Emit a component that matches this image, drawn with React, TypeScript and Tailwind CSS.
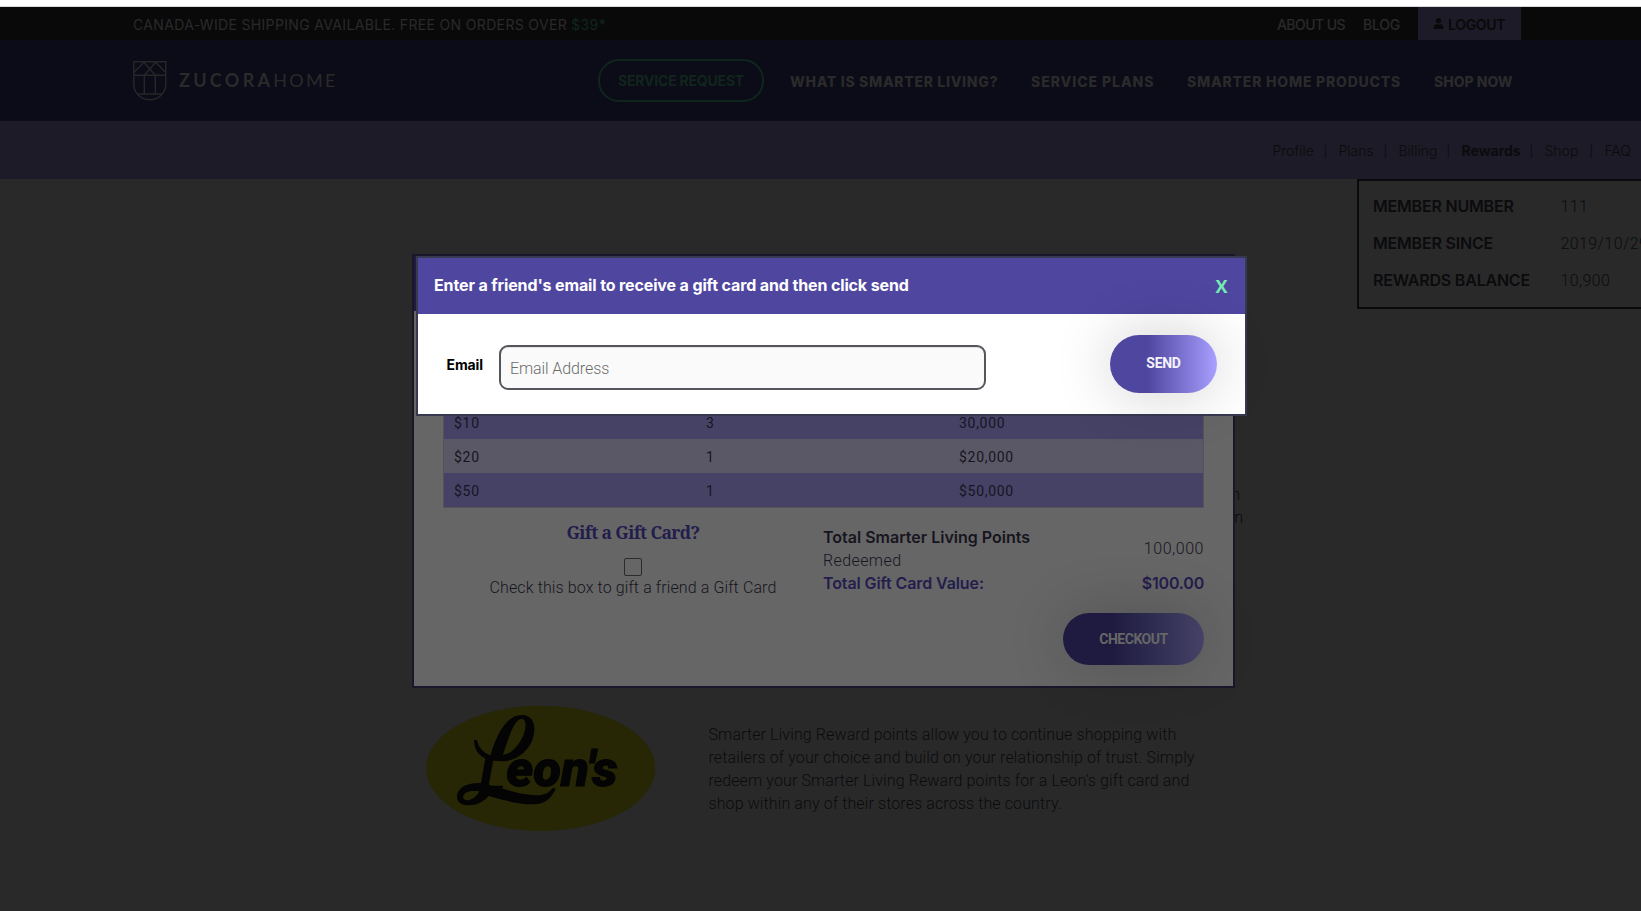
import { FaUser } from "react-icons/fa";

const light = "font-['Roboto',sans-serif] font-light";

function ShieldMark() {
  return (
    <svg width="34" height="40" viewBox="0 0 34 40" fill="none" stroke="#272728" strokeWidth="1.4">
      <path d="M.8.8h32v22.400a16 15.600 0 0 1-32 0z" />
      <path d="M.8 14.200h32M11.300 14.200v18.600M22.300 14.200v18.600M5 33h23.600" />
      <path d="M.8 11.500 11 1.200l11.300 13M32.800 11.500 22.600 1.200l-11.300 13" />
    </svg>
  );
}

function LeonsLogo() {
  return (
    <svg width="230" height="126" viewBox="78 45 690 378" fill="#040404">
      <ellipse cx="422" cy="235" rx="344" ry="188" fill="#272706" />
      <path
        fillRule="evenodd"
        d="M272 195C290 130 322 75 365 75C396 75 405 100 403 122C400 175 352 215 303 214L266 211C240 200 222 182 222 150L231 150C236 175 255 192 272 195ZM309 194C324 150 342 85 366 86C385 90 376 132 360 155C345 178 325 195 309 194Z"
      />
      <path
        fillRule="evenodd"
        d="M248 280C210 275 171 290 171 320C171 340 190 346 208 346C235 346 255 330 266 318C310 330 350 343 400 343C440 343 455 320 468 296L458 294C445 312 425 318 400 315C350 312 320 298 281 289ZM190 318C195 303 215 301 238 304C230 320 215 331 203 331C192 331 188 325 190 318Z"
      />
      <text x="238" y="306" fontSize="146" textLength="78" lengthAdjust="spacingAndGlyphs" className="font-['Roboto',sans-serif] font-black italic">L</text>
      <text x="319" y="288" fontSize="152" textLength="334" lengthAdjust="spacingAndGlyphs" stroke="#040404" strokeWidth="3" className="font-['Roboto',sans-serif] font-black italic">eon's</text>
    </svg>
  );
}

function TopBar() {
  return (
    <div className="flex h-[33px] items-center bg-[#09090a] pr-[120px] pl-[133px] font-['Inter',sans-serif] text-[14px] text-[#2a2a2a]">
      <p className="pt-px tracking-[0.34px] whitespace-nowrap">
        CANADA-WIDE SHIPPING AVAILABLE. FREE ON ORDERS OVER <span className="text-[#10261c]">$39*</span>
      </p>
      <a className="ml-auto pt-px font-medium tracking-[-0.55px]">ABOUT US</a>
      <a className="ml-[18px] pt-px font-medium tracking-[-0.25px]">BLOG</a>
      <a className="ml-[18px] flex h-full w-[103px] items-center gap-[4px] bg-[#1c1b27] pt-px pl-[15px] font-semibold tracking-[-0.3px] text-[#09090a]">
        <FaUser size={11} className="mb-[2px]" />
        LOGOUT
      </a>
    </div>
  );
}

function MainNav() {
  return (
    <div className="flex h-[81px] items-center bg-[#0c0b18] pl-[133px] font-['Inter',sans-serif] text-[14px] font-extrabold whitespace-nowrap text-[#2a2a2a]">
      <ShieldMark />
      <div className="ml-[12px] flex w-[419px] font-['Lato',sans-serif] text-[18px] text-[#2a2a2a]">
        <span className="font-bold tracking-[3.3px]">ZUCORA</span>
        <span className="font-normal tracking-[2.3px]">HOME</span>
      </div>
      <a className="flex h-[43px] w-[166px] items-center justify-center rounded-[21px] border-2 border-[#10261c] font-bold tracking-[-0.2px] text-[#10261c]">
        SERVICE REQUEST
      </a>
      <a className="ml-[26px] w-[241px] pt-[2px] tracking-[0.68px]">WHAT IS SMARTER LIVING?</a>
      <a className="w-[156px] pt-[2px] tracking-[0.93px]">SERVICE PLANS</a>
      <a className="w-[247px] pt-[2px] tracking-[0.78px]">SMARTER HOME PRODUCTS</a>
      <a className="pt-[2px]">SHOP NOW</a>
    </div>
  );
}

function SubNav() {
  return (
    <div className="flex h-[58px] items-center bg-[#1c1b27] pt-px pl-[1272.5px] font-['Inter',sans-serif] text-[14px] font-light whitespace-nowrap text-[#0b0b0d]">
      <span className="w-[51px]">Profile</span>
      <span className="w-[15px] text-[12px]">|</span>
      <span className="w-[45px]">Plans</span>
      <span className="w-[15px] text-[12px]">|</span>
      <span className="w-[48px]">Billing</span>
      <span className="w-[15px] text-[12px]">|</span>
      <span className="w-[68px] font-bold">Rewards</span>
      <span className="w-[15px] text-[12px]">|</span>
      <span className="w-[45px]">Shop</span>
      <span className="w-[15px] text-[12px]">|</span>
      <span className="tracking-[-0.1px]">FAQ</span>
    </div>
  );
}

const member = [
  ["MEMBER NUMBER", "111"],
  ["MEMBER SINCE", "2019/10/29"],
  ["REWARDS BALANCE", "10,900"],
];

function MemberBox() {
  return (
    <div className="ml-[1357px] h-[130px] w-[340px] border-2 border-[#0a0a0c] pt-[7px] pl-[14px] text-[16px] text-[#0b0b0d]">
      {member.map(([k, v]) => (
        <div key={k} className="flex h-[37px] items-center">
          <span className="w-[187.5px] pb-[2px] font-['Inter',sans-serif] font-semibold tracking-[-0.2px]">{k}</span>
          <span className={`${light} tracking-[0.4px]`}>{v}</span>
        </div>
      ))}
    </div>
  );
}

function PageBody() {
  return (
    <div className="font-['Roboto',sans-serif] text-[16px] leading-[23px] font-light text-[#0b0b0d]">
      <div className="mt-[174px] flex h-[46px] w-[1243px] flex-col items-end">
        <span className="pr-[3px]">n</span>
        <span>n</span>
      </div>
      <div className="mt-[176px] flex pl-[426px]">
        <LeonsLogo />
        <p className="mt-[18px] ml-[52px] pl-[0.5px] tracking-[0.11px] whitespace-nowrap">
          Smarter Living Reward points allow you to continue shopping with
          <br />
          retailers of your choice and build on your relationship of trust. Simply
          <br />
          redeem your Smarter Living Reward points for a Leon’s gift card and
          <br />
          shop within any of their stores across the country.
        </p>
      </div>
    </div>
  );
}

const rows = [
  ["$10", "3", "30,000", "bg-[#454266]"],
  ["$20", "1", "$20,000", "bg-[#5a5866]"],
  ["$50", "1", "$50,000", "bg-[#454266]"],
];

function RedeemDialog() {
  return (
    <div className="absolute top-[254px] left-[412px] h-[434px] w-[823px] border-2 border-[#19182a] bg-[#666] text-[#16151f]">
      <div className="h-[55px] bg-[#1f1b40]" />
      <div className="mx-[29px] mt-[94px] border border-t-0 border-[#555459] font-['Roboto',sans-serif] text-[14px] tracking-[0.7px]">
        {rows.map(([value, qty, points, bg]) => (
          <div key={value} className={`grid h-[34px] grid-cols-[252px_253px_1fr] items-center pt-[3px] pl-[10px] ${bg}`}>
            <span>{value}</span>
            <span>{qty}</span>
            <span>{points}</span>
          </div>
        ))}
      </div>
      <div className="flex px-[29px]">
        <div className="flex w-[380px] flex-col items-center pt-[12px]">
          <h3 className="font-['Noto_Serif','Liberation_Serif',serif] text-[17.5px] leading-[24px] font-bold tracking-[-0.65px] text-[#231d4d]">
            Gift a Gift Card?
          </h3>
          <span className="mt-[14px] size-[18px] rounded-[2px] border border-[#2b2b2d]" />
          <p className={`${light} leading-[23px] tracking-[0.11px] whitespace-nowrap`}>
            Check this box to gift a friend a Gift Card
          </p>
        </div>
        <div className="flex flex-1 flex-col pt-[18px] text-[16px] leading-[23px]">
          <div className="flex items-center justify-between">
            <div>
              <p className="font-['Inter',sans-serif] font-semibold">Total Smarter Living Points</p>
              <p className={`${light} tracking-[0.4px]`}>Redeemed</p>
            </div>
            <span className={`${light} pb-[2px] tracking-[0.55px]`}>100,000</span>
          </div>
          <div className="flex justify-between font-['Inter',sans-serif] font-semibold tracking-[-0.1px] text-[#231d4d]">
            <span>Total Gift Card Value:</span>
            <span className="tracking-[-0.2px]">$100.00</span>
          </div>
          <button className="mt-[18px] h-[52px] w-[141px] self-end rounded-[26px] bg-linear-to-r from-[#1f1b40] from-35% to-[#454266] font-['Roboto',sans-serif] text-[14px] font-bold tracking-[-0.47px] text-[#666] shadow-[0_0_60px_rgba(0,0,0,0.2)]">
            CHECKOUT
          </button>
        </div>
      </div>
    </div>
  );
}

function EmailDialog() {
  return (
    <div className="absolute top-[256px] left-[416px] h-[160px] w-[831px] border-2 border-[#38384f] bg-white">
      <div className="flex h-[56px] items-center justify-between bg-[#4f46a0] pr-[17.5px] pl-[16px]">
        <h2 className="pb-[2px] font-['Inter',sans-serif] text-[16px] font-bold tracking-[-0.13px] text-white">
          Enter a friend's email to receive a gift card and then click send
        </h2>
        <button className="font-['Open_Sans',sans-serif] text-[18px] font-bold text-[#76ecb5]">X</button>
      </div>
      <div className="flex h-[100px] items-start pl-[28px]">
        <label className="mt-[41px] w-[53px] pl-[0.5px] font-['Inter',sans-serif] text-[14px] leading-[20px] font-bold tracking-[-0.1px] text-black">
          Email
        </label>
        <input
          placeholder="Email Address"
          className="mt-[31px] h-[45px] w-[487px] rounded-[9px] border-2 border-[#55565c] bg-[#fafafa] pt-[2px] pl-[9px] font-['Roboto',sans-serif] text-[16px] font-light tracking-[-0.1px] inset-shadow-[0_1px_1px_rgba(0,0,0,0.1)] placeholder:text-[#6c6c6c]"
        />
        <button className="mt-[21px] ml-[124px] h-[58px] w-[107px] rounded-[29px] bg-linear-to-r from-[#4f46a0] from-35% to-[#a9a0ff] pb-[2px] font-['Roboto',sans-serif] text-[14px] font-bold tracking-[-0.3px] text-[#f4f3fb] shadow-[0_0_60px_rgba(0,0,0,0.2)]">
          SEND
        </button>
      </div>
    </div>
  );
}

export default function App() {
  return (
    <div className="relative h-[911px] w-[1641px] overflow-hidden bg-[#292929]">
      <div className="h-[7px] border-b border-[#d5d9dc] bg-white" />
      <TopBar />
      <MainNav />
      <SubNav />
      <MemberBox />
      <PageBody />
      <RedeemDialog />
      <EmailDialog />
    </div>
  );
}
